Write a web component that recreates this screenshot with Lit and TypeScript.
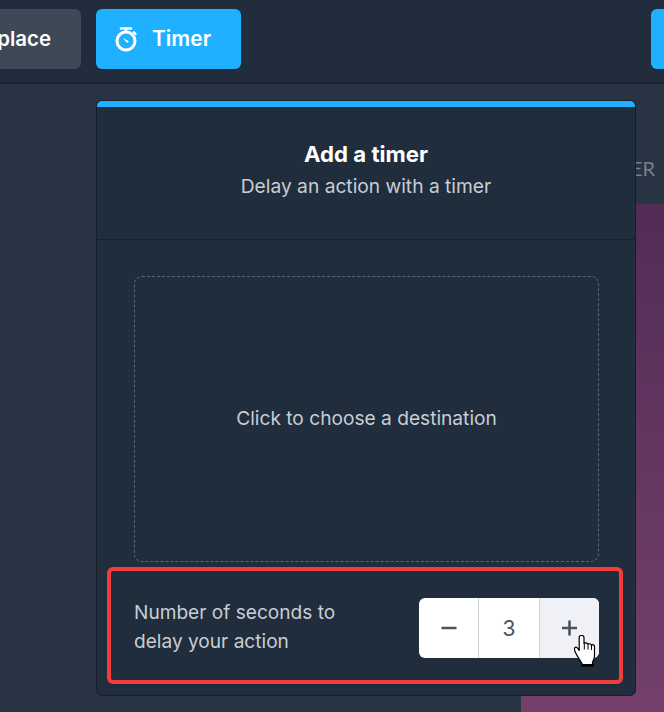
import { LitElement, css, html } from 'lit';
import { customElement } from 'lit/decorators.js';

@customElement('app-root')
export class AppRoot extends LitElement {
  render() {
    return html`
      <div class="page">
        <header class="toolbar">
          <button class="tool tool-place"><span>place</span></button>
          <button class="tool tool-timer">
            <svg width="26" height="26" viewBox="0 0 26 26" fill="none" stroke="#fff">
              <path d="M8 2.500h10" stroke-linecap="round" stroke-width="2.600" />
              <path d="M13 3v3" stroke-width="2.400" />
              <circle cx="13" cy="15" r="9" stroke-width="3" />
              <path d="M20.800 6.200l1.800 1.800" stroke-width="2.200" stroke-linecap="round" />
              <path d="M9.500 11.800l6.300 3.500-1.600 1.800z" fill="#fff" stroke="none" />
            </svg>
            <span>Timer</span>
          </button>
          <div class="tool-edge"></div>
        </header>

        <main class="stage">
          <div class="side-label">ER</div>
          <div class="preview"></div>

          <section class="panel">
            <div class="accent"></div>
            <div class="panel-head">
              <h2>Add a timer</h2>
              <p>Delay an action with a timer</p>
            </div>
            <div class="panel-body">
              <div class="dropzone">Click to choose a destination</div>
            </div>
            <div class="delay-row">
              <div class="delay-label">Number of seconds to<br />delay your action</div>
              <div class="stepper">
                <div class="step">
                  <svg width="16" height="16" viewBox="0 0 16 16"><path d="M0.500 8h15" stroke="#4a5364" stroke-width="2.600" /></svg>
                </div>
                <div class="step value">3</div>
                <div class="step active">
                  <svg width="16" height="16" viewBox="0 0 16 16"><path d="M0 8h15M7.500 0.500v15" stroke="#4a5364" stroke-width="2.600" /></svg>
                </div>
              </div>
              <svg class="cursor" width="22" height="32" viewBox="0 0 22 32">
                <path
                  d="M5.200 2.500c0-1.300 1-2 2.300-2s2.500.7 2.500 2V8.500c1.200-.7 2.800-.6 3.500.5 1.200-.6 3-.4 3.500.8 1.500-.5 3.500.1 3.500 1.700V21c0 3-1.500 5-2 6.500V31H8v-2.500C6 25 3 21 1.500 17.500.5 15.500 0 13.500 1 12.500c1-.8 2.500 0 4.200 3z"
                  fill="#fff"
                  stroke="#000"
                  stroke-width="1.200"
                  stroke-linejoin="round"
                />
                <path d="M10.300 8.500v6M14 9v5.500M17.500 10v5" stroke="#000" stroke-width="1" fill="none" />
                <path d="M8 29h12v2.500H8z" fill="#000" />
              </svg>
            </div>
          </section>
        </main>
      </div>
    `;
  }

  static styles = css`
    :host {
      display: block;
      font-family: Inter, 'Noto Sans', sans-serif;
    }

    .page {
      width: 664px;
      height: 712px;
      overflow: hidden;
      display: flex;
      flex-direction: column;
      background: #283343;
    }

    .toolbar {
      height: 73px;
      flex: none;
      display: flex;
      align-items: flex-start;
      padding-top: 9px;
      background: #212d3d;
      border-bottom: 2px solid #1a222e;
    }

    .tool {
      height: 60px;
      border: none;
      border-radius: 6px;
      font: inherit;
      font-size: 21px;
      font-weight: 600;
      color: #fff;
      display: flex;
      align-items: center;
      padding: 0;
    }

    .tool span {
      margin-top: -2px;
    }

    .tool-place {
      width: 81px;
      border-radius: 0 6px 6px 0;
      background: #3e4958;
      justify-content: flex-end;
      padding-right: 30px;
      box-sizing: border-box;
      white-space: nowrap;
      font-size: 20.400px;
    }

    .tool-timer {
      width: 145px;
      margin-left: 15px;
      background: #1fb1ff;
      padding-left: 17px;
      box-sizing: border-box;
      gap: 13px;
    }

    .tool-edge {
      width: 13px;
      height: 60px;
      margin-left: auto;
      background: #1fb1ff;
      border-radius: 6px 0 0 6px;
    }

    .stage {
      position: relative;
      flex: 1;
    }

    .side-label {
      position: absolute;
      left: 631px;
      top: 72px;
      font-family: Lato, sans-serif;
      font-size: 20px;
      line-height: 24px;
      color: #76808e;
    }

    .preview {
      position: absolute;
      left: 521px;
      right: 0;
      top: 120px;
      bottom: 0;
      background: linear-gradient(180deg, #522c55 0%, #74406b 100%);
    }

    .panel {
      position: absolute;
      left: 96px;
      top: 16px;
      width: 540px;
      height: 596px;
      box-sizing: border-box;
      display: flex;
      flex-direction: column;
      overflow: hidden;
      background: #202d3d;
      border: 1px solid #161f2b;
      border-radius: 6px;
    }

    .accent {
      height: 6px;
      flex: none;
      background: #1fb1ff;
    }

    .panel-head {
      height: 133px;
      flex: none;
      box-sizing: border-box;
      border-bottom: 1px solid #17212d;
      text-align: center;
      padding-top: 33px;
    }

    h2 {
      margin: 0;
      font-size: 22.200px;
      line-height: 28px;
      font-weight: 700;
      color: #fff;
    }

    p {
      margin: 5px 0 0;
      font-size: 19.200px;
      line-height: 26px;
      color: #c9cdd3;
    }

    .panel-body {
      padding: 36px 36px 0 37px;
    }

    .dropzone {
      height: 286px;
      box-sizing: border-box;
      display: flex;
      align-items: center;
      justify-content: center;
      padding-bottom: 2px;
      border: 1px dashed #5c6675;
      border-radius: 8px;
      font-size: 19.150px;
      color: #c9cdd3;
    }

    .delay-row {
      position: relative;
      width: 516px;
      height: 117px;
      margin: 5px 0 0 10px;
      box-sizing: border-box;
      display: flex;
      align-items: center;
      justify-content: space-between;
      padding: 5px 20px 0 23px;
      border: 4px solid #f43c3c;
      border-radius: 6px;
    }

    .delay-label {
      margin-top: -3px;
      font-size: 19.100px;
      line-height: 29px;
      color: #c9cdd3;
    }

    .stepper {
      display: flex;
      width: 180px;
      height: 60px;
      border-radius: 6px;
      overflow: hidden;
      background: #fff;
    }

    .step {
      flex: 1;
      display: flex;
      align-items: center;
      justify-content: center;
      font-size: 21px;
      color: #4a5364;
    }

    .value {
      flex: none;
      width: 62px;
      box-sizing: border-box;
      border-left: 1px solid #d0d4db;
      border-right: 1px solid #d0d4db;
    }

    .active {
      background: #eff1f6;
    }

    .cursor {
      position: absolute;
      left: 463px;
      top: 64px;
    }
  `;
}

declare global {
  interface HTMLElementTagNameMap {
    'app-root': AppRoot;
  }
}
